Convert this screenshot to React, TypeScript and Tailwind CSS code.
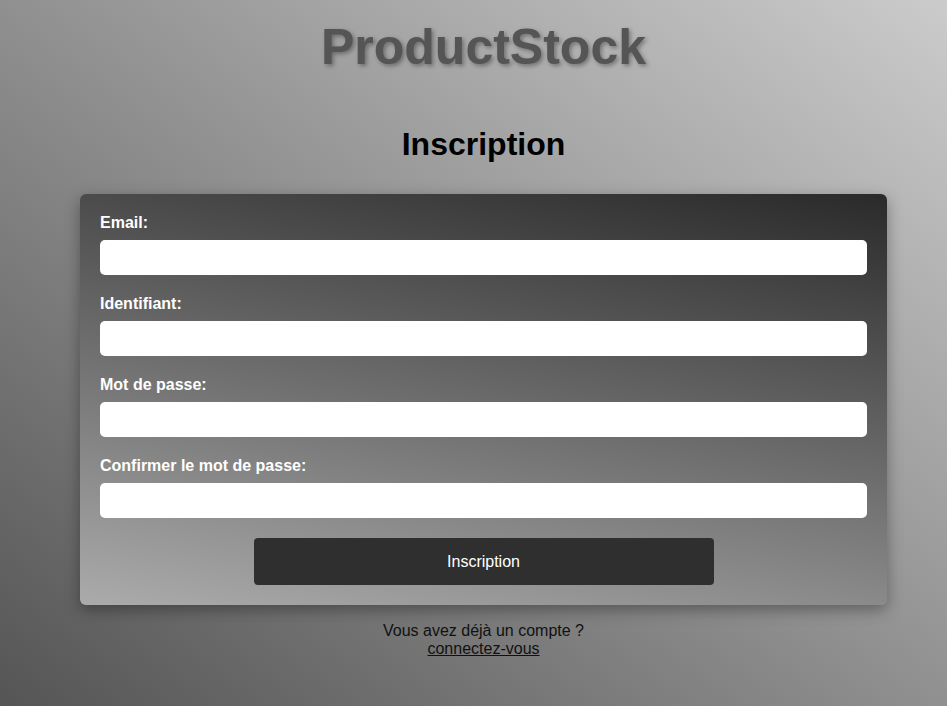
export default function App() {
  const fields = [
    { id: "email", label: "Email:", type: "email" },
    { id: "username", label: "Identifiant:", type: "text" },
    { id: "password", label: "Mot de passe:", type: "password" },
    { id: "confirm", label: "Confirmer le mot de passe:", type: "password" },
  ];

  return (
    <div
      className="min-h-screen w-full bg-[linear-gradient(to_top_right,#555555,#cbcbcb)] text-[#111]"
      style={{ fontFamily: "'Liberation Sans', Arial, sans-serif" }}
    >
      <div className="flex flex-col items-center pt-[18px] pl-5">
        {/* Logo */}
        <h1 className="text-[50px] leading-[58px] font-bold text-[#555] [text-shadow:2px_2px_4px_rgba(0,0,0,0.35)]">
          ProductStock
        </h1>

        <h2 className="mt-[50px] text-[32px] leading-[37px] font-bold text-black">Inscription</h2>

        {/* Form card */}
        <form className="mt-[31px] w-[807px] rounded-md p-5 bg-[linear-gradient(190deg,#2a2a2a,#ababab)] shadow-[0_5px_15px_rgba(0,0,0,0.35)]">
          {fields.map((f) => (
            <div key={f.id} className="mb-5">
              <label htmlFor={f.id} className="block text-base leading-[18px] font-bold text-white">
                {f.label}
              </label>
              <input
                id={f.id}
                type={f.type}
                className="mt-2 block h-[35px] w-full rounded-[5px] bg-white px-2 outline-none"
              />
            </div>
          ))}
          <div className="flex justify-center">
            <button
              type="button"
              className="h-[47px] w-[460px] rounded-[4px] bg-[#2f2f2f] text-base text-white"
            >
              Inscription
            </button>
          </div>
        </form>

        {/* Login link */}
        <div className="mt-[17px] text-center text-base leading-[18px] text-[#111]">
          <p>Vous avez déjà un compte ?</p>
          <a href="#" className="underline">
            connectez-vous
          </a>
        </div>
      </div>
    </div>
  );
}
